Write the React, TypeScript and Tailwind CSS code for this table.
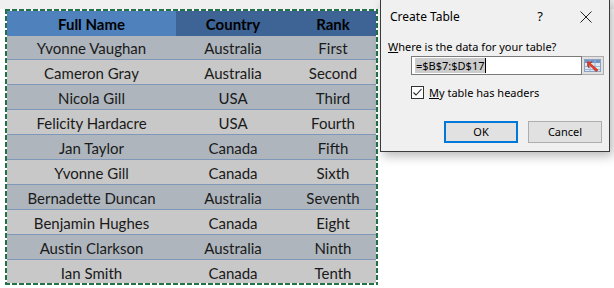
import React from "react";

const rows = [
  ["Yvonne Vaughan", "Australia", "First"],
  ["Cameron Gray", "Australia", "Second"],
  ["Nicola Gill", "USA", "Third"],
  ["Felicity Hardacre", "USA", "Fourth"],
  ["Jan Taylor", "Canada", "Fifth"],
  ["Yvonne Gill", "Canada", "Sixth"],
  ["Bernadette Duncan", "Australia", "Seventh"],
  ["Benjamin Hughes", "Canada", "Eight"],
  ["Austin Clarkson", "Australia", "Ninth"],
  ["Ian Smith", "Canada", "Tenth"],
];

const cell = "flex items-center justify-center pt-[2px]";

function RangeIcon() {
  return (
    <svg width="17" height="13" viewBox="0 0 17 13">
      <rect x="0.5" y="0.5" width="16" height="12" fill="#dfe8f3" stroke="#8aa2c2" />
      <rect x="1" y="1" width="15" height="3" fill="#6f93c4" />
      <path d="M1 7.5H16M1 10.5H16M6 1V12M11 1V12" stroke="#9fb6d4" />
      <path d="M6 4 L14 11 L12 12.5 L5 5.5 L5 9 L3.5 7 L3.5 3 L8 3 Z" fill="#e4412b" stroke="#b32a16" strokeWidth="0.6" />
    </svg>
  );
}

function CreateTableDialog() {
  return (
    <div className="absolute left-[380px] top-[-1px] w-[230px] h-[153px] bg-[#f0f0f0] border border-[#3a3a3a] shadow-[3px_4px_10px_rgba(0,0,0,0.28)] font-['Noto_Sans',sans-serif] text-[11px] text-black">
      <div className="flex items-center h-[33px] pl-[9px] pr-[17px] text-[12px]">
        <span className="flex-1">Create Table</span>
        <span className="mr-[37px] text-[13px]">?</span>
        <svg width="12" height="12" viewBox="0 0 12 12">
          <path d="M0.5 0.5L11.5 11.5M11.5 0.5L0.5 11.5" stroke="#222" strokeWidth="1" />
        </svg>
      </div>
      <div className="pl-[7px] h-[16px] leading-[16px] mt-[6px]">
        <span className="underline">W</span>here is the data for your table?
      </div>
      <div className="flex ml-[30px] mt-[1px] h-[19px] w-[193px]">
        <div className="flex-1 flex items-center bg-white border border-[#7a7a7a] pl-[3px]">
          <span className="bg-[#cccccc] leading-[15px] px-[1px]">=$B$7:$D$17</span>
          <span className="w-px h-[15px] bg-black" />
        </div>
        <div className="w-[22px] flex items-center justify-center bg-[#e1e1e1] border border-l-0 border-[#adadad]">
          <RangeIcon />
        </div>
      </div>
      <div className="flex items-center ml-[30px] mt-[11px] h-[13px] gap-[5px]">
        <div className="w-[13px] h-[13px] border border-[#333] bg-white flex items-center justify-center">
          <svg width="11" height="11" viewBox="0 0 11 11">
            <path d="M1.5 5.5L4 8L9.5 2" fill="none" stroke="#222" strokeWidth="1.1" />
          </svg>
        </div>
        <span className="leading-[13px]">
          <span className="underline">M</span>y table has headers
        </span>
      </div>
      <div className="flex ml-[63px] mt-[22px] gap-[10px]">
        <div className="w-[74px] h-[22px] flex items-center justify-center bg-[#e1e1e1] border-2 border-[#0078d7]">
          OK
        </div>
        <div className="w-[74px] h-[22px] flex items-center justify-center bg-[#e1e1e1] border border-[#adadad]">
          Cancel
        </div>
      </div>
    </div>
  );
}

export default function App() {
  return (
    <div className="relative w-[614px] h-[288px] bg-white overflow-hidden">
      <div className="h-[9px] bg-[#f0f0f0]" />
      <div className="ml-[5px] w-[373px] h-[276px] p-[2px] bg-white [background:repeating-linear-gradient(90deg,#217346_0_5px,#ffffff_5px_7px)_0_0/100%_2px_no-repeat,repeating-linear-gradient(90deg,#217346_0_5px,#ffffff_5px_7px)_0_100%/100%_2px_no-repeat,repeating-linear-gradient(180deg,#217346_0_5px,#ffffff_5px_7px)_0_0/2px_100%_no-repeat,repeating-linear-gradient(180deg,#217346_0_5px,#ffffff_5px_7px)_100%_0/2px_100%_no-repeat,#ffffff]">
        <div className="h-full overflow-hidden font-['Lato',sans-serif] text-[15px] text-[#1a1a1a]">
          <div className="grid grid-cols-[169px_114px_86px] h-[24px] border-b border-[#93aacb] font-bold text-black">
            <div className={`${cell} bg-[#4f81bd]`}>Full Name</div>
            <div className={`${cell} bg-[#3e6395]`}>Country</div>
            <div className={`${cell} bg-[#3e6395]`}>Rank</div>
          </div>
          {rows.map((r, i) => (
            <div
              key={i}
              className={`grid grid-cols-[169px_114px_86px] h-[25px] border-b border-[#7f98ba] ${
                i % 2 === 0 ? "bg-[#aeb5bc]" : "bg-[#c8c8c8]"
              }`}
            >
              <div className={cell}>{r[0]}</div>
              <div className={cell}>{r[1]}</div>
              <div className={cell}>{r[2]}</div>
            </div>
          ))}
        </div>
      </div>
      <CreateTableDialog />
    </div>
  );
}
